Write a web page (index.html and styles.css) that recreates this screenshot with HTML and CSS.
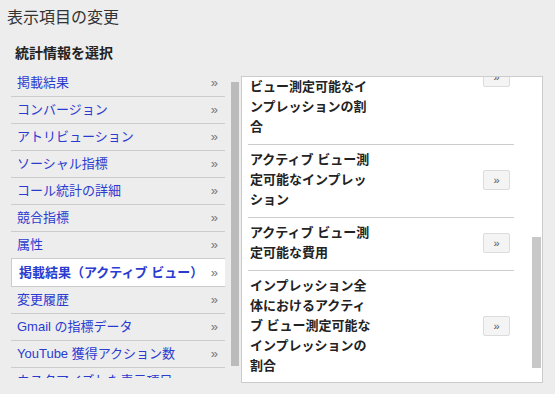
FILE: index.html
```html
<!DOCTYPE html>
<html lang="ja">
<head>
    <meta charset="UTF-8">
    <meta name="viewport" content="width=device-width, initial-scale=1.0">
    <title>表示項目の変更</title>
    <link rel="stylesheet" href="styles.css">
</head>
<body>
    <div class="title">表示項目の変更</div>
    <div class="section-title">統計情報を選択</div>

    <div class="chooser">
        <div class="metric-list">
            <div class="metric">掲載結果<span class="arrow">»</span></div>
            <div class="metric">コンバージョン<span class="arrow">»</span></div>
            <div class="metric">アトリビューション<span class="arrow">»</span></div>
            <div class="metric">ソーシャル指標<span class="arrow">»</span></div>
            <div class="metric">コール統計の詳細<span class="arrow">»</span></div>
            <div class="metric">競合指標<span class="arrow">»</span></div>
            <div class="metric">属性<span class="arrow">»</span></div>
            <div class="metric selected">掲載結果（アクティブ ビュー）<span class="arrow">»</span></div>
            <div class="metric">変更履歴<span class="arrow">»</span></div>
            <div class="metric">Gmail の指標データ<span class="arrow">»</span></div>
            <div class="metric">YouTube 獲得アクション数<span class="arrow">»</span></div>
            <div class="metric">カスタマイズした表示項目<span class="arrow">»</span></div>
        </div>
        <div class="list-scroll"><div class="thumb"></div></div>

        <div class="detail-panel">
            <div class="detail-rows">
                <div class="detail-row">
                    <div class="detail-name">視認可能なインプレッション全体の数値におけるアクティブ ビュー測定可能なインプレッションの割合</div>
                    <button class="add">»</button>
                </div>
                <div class="detail-row">
                    <div class="detail-name">アクティブ ビュー測定可能なインプレッション</div>
                    <button class="add">»</button>
                </div>
                <div class="detail-row">
                    <div class="detail-name">アクティブ ビュー測定可能な費用</div>
                    <button class="add">»</button>
                </div>
                <div class="detail-row">
                    <div class="detail-name">インプレッション全体におけるアクティブ ビュー測定可能なインプレッションの割合</div>
                    <button class="add">»</button>
                </div>
            </div>
            <div class="panel-scroll"></div>
        </div>
    </div>
</body>
</html>
```

FILE: styles.css
```css
body {
    margin: 0;
    background: #ededed;
    font-family: "Liberation Sans", "Noto Sans CJK JP", sans-serif;
    color: #222;
}

.title {
    padding: 8px 7px 0;
    font-size: 16px;
    line-height: 20px;
    color: #333;
}

.section-title {
    margin-top: 15px;
    padding-left: 15px;
    font-size: 14px;
    font-weight: bold;
    line-height: 20px;
}

.chooser {
    display: flex;
    align-items: flex-start;
    margin-top: 7px;
    padding-left: 11px;
}

/* left column of metric groups */
.metric-list {
    width: 214px;
    height: 308px;
    overflow: hidden;
}

.metric {
    display: flex;
    justify-content: space-between;
    height: 26px;
    padding: 0 7px 0 6px;
    border-bottom: 1px solid #ccc;
    font-size: 13px;
    line-height: 26px;
    color: #2b3bd0;
    white-space: nowrap;
}

.metric.selected {
    height: 27px;
    margin-top: -1px;
    padding-left: 7px;
    border-top: 1px solid #ccc;
    border-left: 1px solid #ccc;
    background: #fff;
    font-weight: bold;
    line-height: 27px;
}

.arrow {
    color: #777;
    font-weight: normal;
}

.list-scroll {
    width: 8px;
    margin-left: 6px;
}

.list-scroll .thumb {
    height: 284px;
    margin-top: 12px;
    background: #bbb;
}

/* right panel with the metrics of the group */
.detail-panel {
    display: flex;
    align-items: flex-start;
    box-sizing: border-box;
    width: 302px;
    height: 307px;
    margin: 6px 0 0 2px;
    background: #fff;
    border: 1px solid #ccc;
    overflow: hidden;
}

.detail-rows {
    width: 266px;
    margin: -65px 0 0 6px;
}

.detail-row {
    display: flex;
    justify-content: space-between;
    align-items: center;
    padding: 5px 4px 7px 2px;
    border-bottom: 1px solid #ccc;
}

.detail-name {
    width: 124px;
    font-size: 13px;
    font-weight: bold;
    line-height: 20px;
    color: #222;
}

.add {
    width: 27px;
    height: 20px;
    padding: 0;
    background: #f4f4f4;
    border: 1px solid #dcdcdc;
    border-radius: 2px;
    font-family: "Liberation Sans", sans-serif;
    font-size: 11px;
    color: #555;
}

.panel-scroll {
    width: 9px;
    height: 131px;
    margin: 160px 1px 0 auto;
    background: #c8c8c8;
}
```
